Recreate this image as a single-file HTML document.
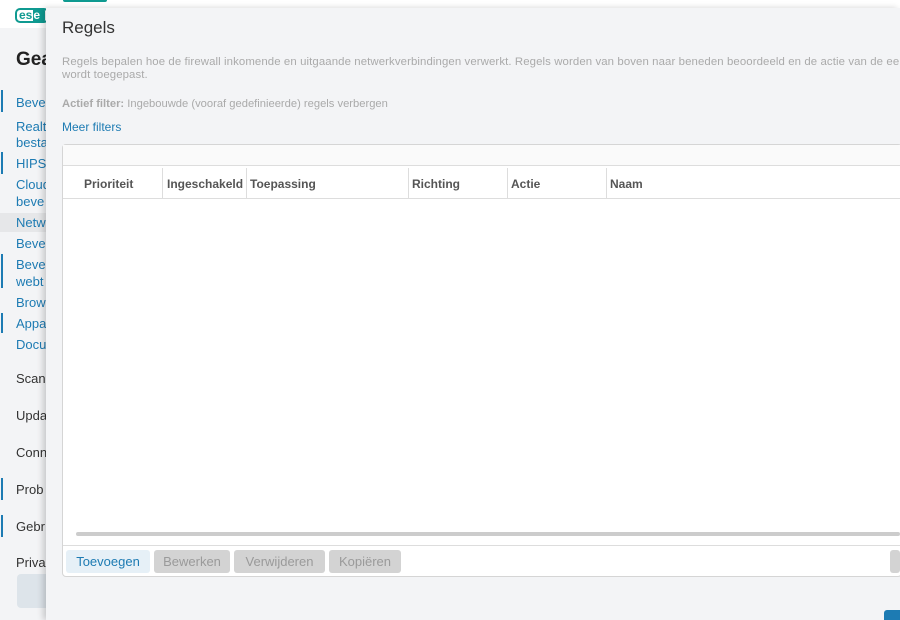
<!DOCTYPE html>
<html><head><style>
*{margin:0;padding:0;box-sizing:border-box}
html,body{width:900px;height:620px;overflow:hidden}
body{position:relative;background:#f3f4f6;font-family:"Liberation Sans",sans-serif}
.a{position:absolute;white-space:nowrap}
.s{font-size:13px;color:#1d7bb3;left:16px}
.d{font-size:13px;color:#333;left:16px}
.bar{position:absolute;left:1px;width:2px;background:#1d7bb3}
.th{position:absolute;top:177px;font-size:12px;font-weight:bold;color:#555}
.sep{position:absolute;top:168px;width:1px;height:30px;background:#ddd}
.btn{position:absolute;top:550px;height:23px;border-radius:3px;font-size:13px;line-height:23px;text-align:center;background:#d3d3d3;color:#9a9a9a}
</style></head><body>
<div class="a" style="left:0;top:0;width:46px;height:28px;background:#fff"></div>
<div class="a" style="left:15px;top:8px;width:34px;height:15px;border:2px solid #0f9a91;border-radius:5px;font-size:12px;font-weight:bold;color:#0f9a91;line-height:11px;padding-left:2px;overflow:hidden">es<span style="display:inline-block;background:#0f9a91;color:#fff;width:12px;height:13px;margin-left:1px">e</span></div>
<div class="a d" style="top:49px;font-size:19px;font-weight:bold;color:#222">Gea</div>
<div class="a" style="left:0;top:213px;width:46px;height:19px;background:#e6e7e9"></div>
<div class="bar" style="top:90px;height:22px"></div>
<div class="bar" style="top:152px;height:22px"></div>
<div class="bar" style="top:254px;height:34px"></div>
<div class="bar" style="top:313px;height:20px"></div>
<div class="bar" style="top:478px;height:22px"></div>
<div class="bar" style="top:515px;height:22px"></div>
<div class="a s" style="top:95px">Beve</div>
<div class="a s" style="top:119px">Realt</div>
<div class="a s" style="top:135px">besta</div>
<div class="a s" style="top:156px">HIPS</div>
<div class="a s" style="top:177px">Cloud</div>
<div class="a s" style="top:194px">beve</div>
<div class="a s" style="top:215px">Netw</div>
<div class="a s" style="top:236px">Beve</div>
<div class="a s" style="top:257px">Beve</div>
<div class="a s" style="top:274px">webt</div>
<div class="a s" style="top:295px">Brow</div>
<div class="a s" style="top:316px">Appa</div>
<div class="a s" style="top:337px">Docu</div>
<div class="a d" style="top:371px">Scans</div>
<div class="a d" style="top:408px">Upda</div>
<div class="a d" style="top:445px">Conn</div>
<div class="a d" style="top:482px">Prob</div>
<div class="a d" style="top:519px">Gebr</div>
<div class="a d" style="top:555px">Priva</div>
<div class="a" style="left:17px;top:574px;width:40px;height:34px;border-radius:4px;background:#dde4ea"></div>

<div class="a" style="left:46px;top:0;width:854px;height:8px;background:#fff"></div>
<div class="a" style="left:63px;top:0;width:44px;height:2px;background:#0f9a91;border-radius:0 0 4px 4px"></div>
<div class="a" style="left:46px;top:8px;width:854px;height:612px;background:#f3f4f6;box-shadow:-3px 0 6px rgba(0,0,0,.18)"></div>
<div class="a" style="left:62px;top:18px;font-size:17px;color:#333">Regels</div>
<div class="a" style="left:62px;top:56px;font-size:11.4px;color:#aaa;line-height:13px;letter-spacing:0.1px">Regels bepalen hoe de firewall inkomende en uitgaande netwerkverbindingen verwerkt. Regels worden van boven naar beneden beoordeeld en de actie van de eerste<br>wordt toegepast.</div>
<div class="a" style="left:62px;top:98px;font-size:11.2px;color:#aaa"><b>Actief filter:</b> Ingebouwde (vooraf gedefinieerde) regels verbergen</div>
<div class="a" style="left:62px;top:120px;font-size:12px;color:#1d7bb3">Meer filters</div>
<div class="a" style="left:62px;top:144px;width:840px;height:433px;background:#fff;border:1px solid #d5d5d5;border-radius:4px"></div>
<div class="a" style="left:63px;top:145px;width:837px;height:21px;background:#fafafa;border-bottom:1px solid #ddd"></div>
<div class="a" style="left:63px;top:198px;width:837px;height:1px;background:#ddd"></div>
<div class="sep" style="left:162px"></div><div class="sep" style="left:246px"></div><div class="sep" style="left:408px"></div><div class="sep" style="left:507px"></div><div class="sep" style="left:606px"></div>
<div class="th" style="left:84px">Prioriteit</div>
<div class="th" style="left:167px">Ingeschakeld</div>
<div class="th" style="left:250px">Toepassing</div>
<div class="th" style="left:412px">Richting</div>
<div class="th" style="left:511px">Actie</div>
<div class="th" style="left:610px">Naam</div>
<div class="a" style="left:76px;top:532px;width:824px;height:4px;border-radius:2px;background:#ccc"></div>
<div class="a" style="left:63px;top:545px;width:837px;height:1px;background:#ddd"></div>
<div class="btn" style="left:66px;width:84px;background:#e6f0f7;color:#1d7bb3">Toevoegen</div>
<div class="btn" style="left:154px;width:76px">Bewerken</div>
<div class="btn" style="left:234px;width:91px">Verwijderen</div>
<div class="btn" style="left:329px;width:72px">Kopiëren</div>
<div class="btn" style="left:890px;width:10px"></div>
<div class="a" style="left:884px;top:610px;width:16px;height:10px;border-radius:3px 0 0 0;background:#1d7bb3"></div>
</body></html>
